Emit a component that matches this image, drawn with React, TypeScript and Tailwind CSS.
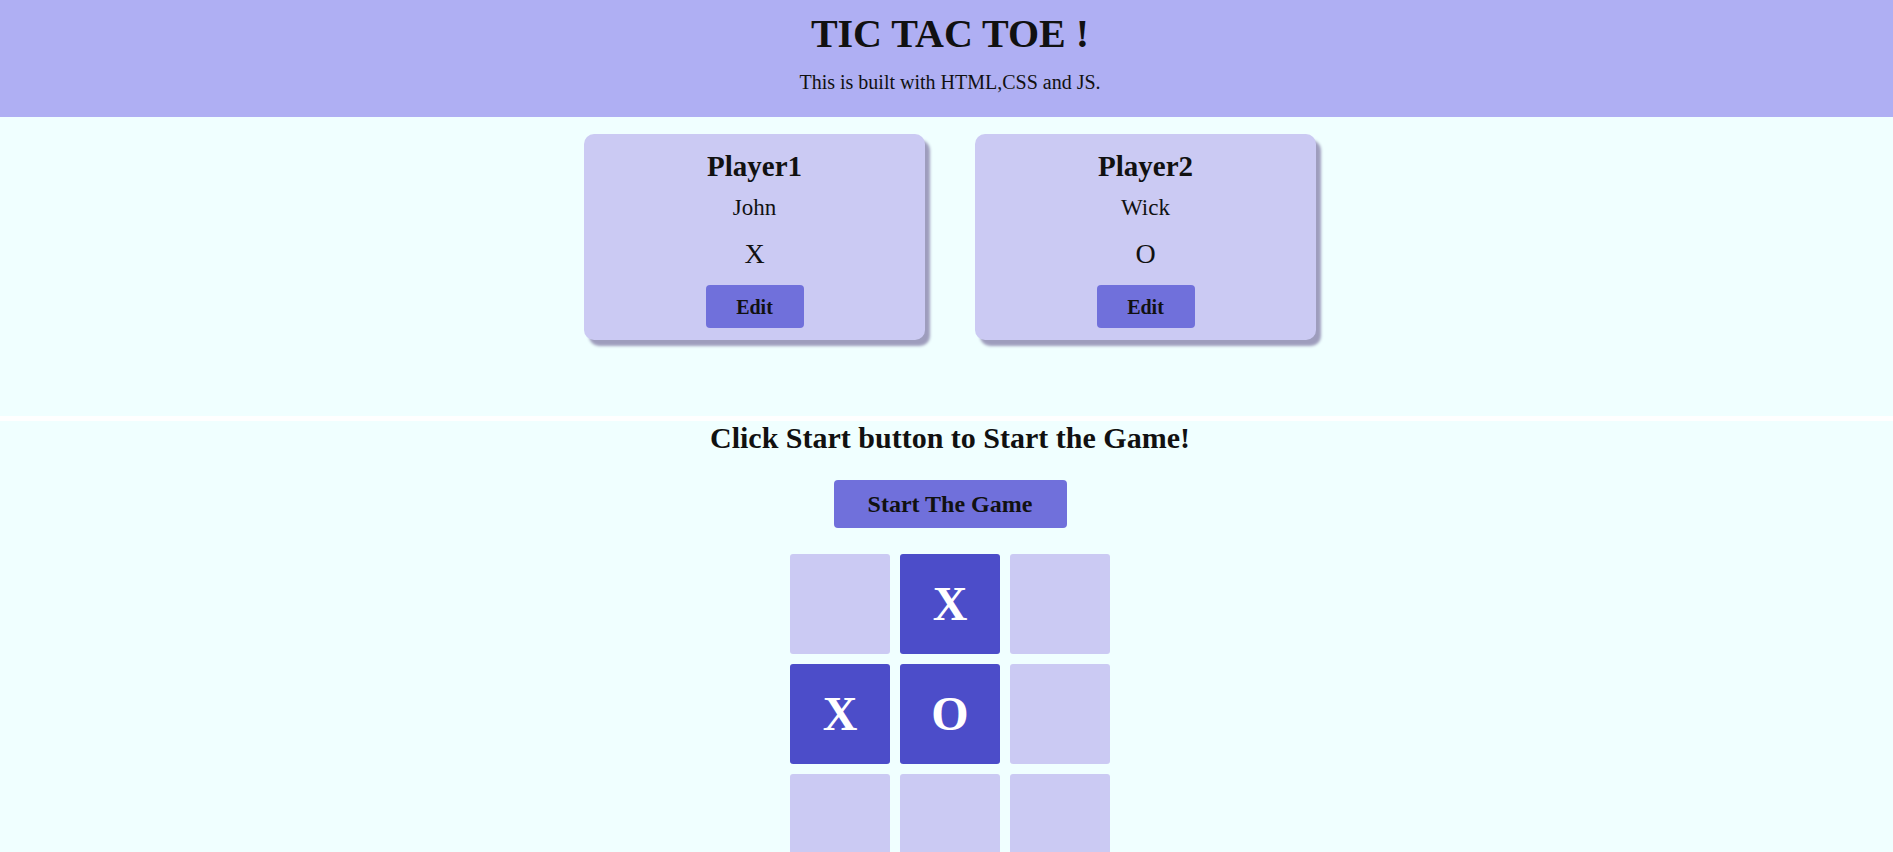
const serif = { fontFamily: '"Liberation Serif", "Times New Roman", serif' };

type Cell = "X" | "O" | "";

const board: Cell[] = ["", "X", "", "X", "O", "", "", "", ""];

const players = [
  { title: "Player1", name: "John", symbol: "X" },
  { title: "Player2", name: "Wick", symbol: "O" },
];

export default function App() {
  return (
    <div style={serif} className="min-h-screen bg-white text-[#111]">
      {/* header */}
      <header className="bg-[#afaff3] pt-[11px] pb-[23px] pl-[7px] text-center">
        <h1 className="text-[40px] leading-[46px] font-bold">TIC TAC TOE !</h1>
        <p className="mt-[14px] text-[20px] leading-[23px]">This is built with HTML,CSS and JS.</p>
      </header>

      {/* players */}
      <section className="bg-[#f0ffff] pt-[17px] pb-[76px] pl-[7px]">
        <div className="flex justify-center gap-[50px]">
          {players.map((p) => (
            <div
              key={p.title}
              className="w-[341px] h-[206px] bg-[#cbcaf3] rounded-[10px] shadow-[5px_6px_3px_#9e9dbd] flex flex-col items-center pt-[15px]"
            >
              <h2 className="text-[29px] leading-[34px] font-bold">{p.title}</h2>
              <p className="mt-[11px] text-[23px] leading-[27px]">{p.name}</p>
              <p className="mt-[17px] text-[28px] leading-[32px]">{p.symbol}</p>
              <button className="mt-[15px] w-[98px] h-[43px] bg-[#7070db] rounded-[4px] text-[20px] font-bold">
                Edit
              </button>
            </div>
          ))}
        </div>
      </section>

      {/* game */}
      <section className="mt-[5px] bg-[#f0ffff] pl-[7px] pb-10 flex flex-col items-center">
        <h2 className="-mt-[1px] text-[30px] leading-[35px] font-bold">Click Start button to Start the Game!</h2>
        <button className="mt-[25px] w-[233px] h-[48px] bg-[#7070db] rounded-[4px] text-[24px] font-bold">
          Start The Game
        </button>
        <div className="mt-[26px] grid grid-cols-[100px_100px_100px] gap-[10px]">
          {board.map((c, i) => (
            <div
              key={i}
              className={
                c
                  ? "w-[100px] h-[100px] rounded-[3px] bg-[#4c4dc9] text-white text-[48px] font-bold flex items-center justify-center"
                  : "w-[100px] h-[100px] rounded-[3px] bg-[#cbcaf3]"
              }
            >
              {c}
            </div>
          ))}
        </div>
      </section>
    </div>
  );
}
